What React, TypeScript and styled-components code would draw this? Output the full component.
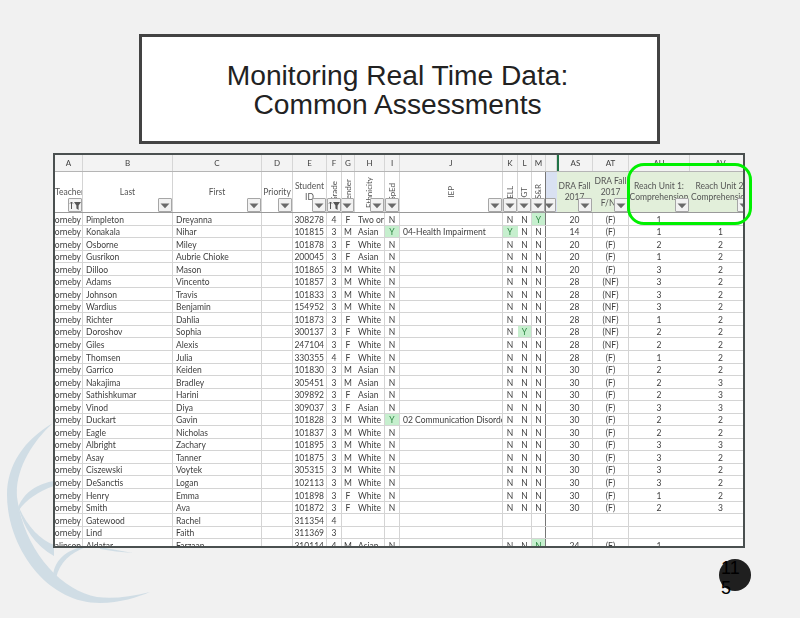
import { ReactElement } from 'react';

import styled, { createGlobalStyle } from 'styled-components';

type Align = 'left' | 'right' | 'center' | 'clip';

interface IColumn {
  letter: string;
  width: number;
  align: Align;
  title: string[];
  rotated?: boolean;
  green?: boolean;
  blue?: boolean;
  noLine?: boolean;
  freeze?: boolean;
  filter?: 'plain' | 'sorted' | 'active';
}

const columns: IColumn[] = [
  { letter: 'A', width: 28, align: 'clip', title: ['Teacher'], filter: 'sorted' },
  { letter: 'B', width: 90, align: 'left', title: ['Last'] },
  { letter: 'C', width: 89, align: 'left', title: ['First'] },
  { letter: 'D', width: 31, align: 'center', title: ['Priority'] },
  { letter: 'E', width: 34, align: 'right', title: ['Student', 'ID'] },
  { letter: 'F', width: 15, align: 'center', title: ['Grade'], rotated: true, filter: 'active' },
  { letter: 'G', width: 13, align: 'center', title: ['Gender'], rotated: true, noLine: true },
  { letter: 'H', width: 30, align: 'left', title: ['Ethnicity'], rotated: true },
  { letter: 'I', width: 15, align: 'center', title: ['SpEd'], rotated: true },
  { letter: 'J', width: 103, align: 'left', title: ['IEP'], rotated: true },
  { letter: 'K', width: 15, align: 'center', title: ['ELL'], rotated: true, noLine: true },
  { letter: 'L', width: 14, align: 'center', title: ['GT'], rotated: true },
  { letter: 'M', width: 14, align: 'center', title: ['S&R'], rotated: true, freeze: true },
  { letter: '', width: 11, align: 'center', title: [], blue: true, noLine: true },
  { letter: 'AS', width: 36, align: 'center', title: ['DRA Fall', '2017'], green: true },
  { letter: 'AT', width: 36, align: 'center', title: ['DRA Fall', '2017', 'F/NF'], green: true },
  { letter: 'AU', width: 61, align: 'center', title: ['Reach Unit 1:', 'Comprehension'], green: true, noLine: true },
  { letter: 'AV', width: 62, align: 'center', title: ['Reach Unit 2:', 'Comprehension'], green: true },
];

const template = columns.map((c) => `${c.width}px`).join(' ');

// one string per row, "|" between the columns, * marks a flagged (green) cell
const rows = [
  'Thorneby|Pimpleton|Dreyanna||308278|4|F|Two or|N||N|N|*Y||20|(F)|1|',
  'Thorneby|Konakala|Nihar||101815|3|M|Asian|*Y|04-Health Impairment|*Y|N|N||14|(F)|1|1',
  'Thorneby|Osborne|Miley||101878|3|F|White|N||N|N|N||20|(F)|2|2',
  'Thorneby|Gusrikon|Aubrie Chioke||200045|3|F|Asian|N||N|N|N||20|(F)|1|2',
  'Thorneby|Dilloo|Mason||101865|3|M|White|N||N|N|N||20|(F)|3|2',
  'Thorneby|Adams|Vincento||101857|3|M|White|N||N|N|N||28|(NF)|3|2',
  'Thorneby|Johnson|Travis||101833|3|M|White|N||N|N|N||28|(NF)|3|2',
  'Thorneby|Wardius|Benjamin||154952|3|M|White|N||N|N|N||28|(NF)|3|2',
  'Thorneby|Richter|Dahlia||101873|3|F|White|N||N|N|N||28|(NF)|1|2',
  'Thorneby|Doroshov|Sophia||300137|3|F|White|N||N|*Y|N||28|(NF)|2|2',
  'Thorneby|Giles|Alexis||247104|3|F|White|N||N|N|N||28|(NF)|2|2',
  'Thorneby|Thomsen|Julia||330355|4|F|White|N||N|N|N||28|(F)|1|2',
  'Thorneby|Garrico|Keiden||101830|3|M|Asian|N||N|N|N||30|(F)|2|2',
  'Thorneby|Nakajima|Bradley||305451|3|M|Asian|N||N|N|N||30|(F)|2|3',
  'Thorneby|Sathishkumar|Harini||309892|3|F|Asian|N||N|N|N||30|(F)|2|3',
  'Thorneby|Vinod|Diya||309037|3|F|Asian|N||N|N|N||30|(F)|3|3',
  'Thorneby|Duckart|Gavin||101828|3|M|White|*Y|02 Communication Disorder|N|N|N||30|(F)|2|2',
  'Thorneby|Eagle|Nicholas||101837|3|M|White|N||N|N|N||30|(F)|2|2',
  'Thorneby|Albright|Zachary||101895|3|M|White|N||N|N|N||30|(F)|3|3',
  'Thorneby|Asay|Tanner||101875|3|M|White|N||N|N|N||30|(F)|3|2',
  'Thorneby|Ciszewski|Voytek||305315|3|M|White|N||N|N|N||30|(F)|3|2',
  'Thorneby|DeSanctis|Logan||102113|3|M|White|N||N|N|N||30|(F)|3|2',
  'Thorneby|Henry|Emma||101898|3|F|White|N||N|N|N||30|(F)|1|2',
  'Thorneby|Smith|Ava||101872|3|F|White|N||N|N|N||30|(F)|2|3',
  'Thorneby|Gatewood|Rachel||311354|4||||||||||||',
  'Thorneby|Lind|Faith||311369|3||||||||||||',
  'Malinson|Aldatar|Farzaan||310114|4|M|Asian|N||N|N|*N||24|(F)|1|',
];

function FilterButton({ kind }: { kind: IColumn['filter'] }): ReactElement {
  return (
    <FilterBox>
      <svg width="12" height="12" viewBox="0 0 12 12">
        {kind === 'sorted' || kind === 'active' ? (
          <>
            <path d="M5 3h7L9.6 6.4V11L7.4 9.6V6.4z" fill="#555" />
            <path d="M2.5 10V3M1 4.6 2.5 3 4 4.6" stroke="#555" fill="none" />
          </>
        ) : (
          <path d="M1.5 4.5h9L6 9.2z" fill="#6a6a6a" />
        )}
      </svg>
    </FilterBox>
  );
}

function Watermark(): ReactElement {
  return (
    <Swirl width="170" height="218" viewBox="0 400 170 218">
      <path d="M53 423C24 440 7 465 7 495 7 545 45 603 100 603 120 603 138 597 150 592 130 597 112 599 97 597 60 590 24 550 17 497 15 470 32 442 53 423Z" />
      <path d="M54 481C36 484 20 494 16 515 22 503 36 492 54 486Z" />
      <path d="M18 505C22 525 34 545 54 556V545C40 540 26 525 18 505Z" />
      <path d="M53 575C55 562 62 553 80 547H86C70 553 60 562 56 578Z" />
      <path d="M100 547 133 553C122 552 110 551 100 549Z" />
    </Swirl>
  );
}

function App(): ReactElement {
  return (
    <Page>
      <GlobalStyle />
      <Watermark />
      <TitleBox>
        Monitoring Real Time Data:
        <br />
        Common Assessments
      </TitleBox>
      <SheetFrame>
        <Sheet>
          <LetterRow>
            {columns.map((c) => (
              <LetterCell key={c.letter || 'gap'} $accent={c.letter === 'AS'}>
                {c.letter}
              </LetterCell>
            ))}
          </LetterRow>
          <HeaderRow>
            {columns.map((c) => (
              <HeaderCell
                key={c.letter || 'gap'}
                $green={c.green}
                $blue={c.blue}
                $freeze={c.freeze}
                $start={c.align === 'clip'}
              >
                <HeaderText $rotated={c.rotated}>
                  {c.title.map((line) => (
                    <span key={line}>{line}</span>
                  ))}
                </HeaderText>
                <FilterButton kind={c.filter ?? 'plain'} />
              </HeaderCell>
            ))}
          </HeaderRow>
          {rows.map((row) => (
            <DataRow key={row}>
              {row.split('|').map((value, i) => {
                const flagged = value.startsWith('*');
                return (
                  <DataCell
                    key={columns[i].letter || 'gap'}
                    $align={columns[i].align}
                    $flagged={flagged}
                    $noLine={columns[i].noLine}
                    $freeze={columns[i].freeze}
                  >
                    {flagged ? value.slice(1) : value}
                  </DataCell>
                );
              })}
            </DataRow>
          ))}
        </Sheet>
        <Highlight />
      </SheetFrame>
      <PageBadge>
        <BadgeText>11 5</BadgeText>
      </PageBadge>
    </Page>
  );
}

const GlobalStyle = createGlobalStyle`
  html, body {
    margin: 0;
    padding: 0;
    background: #f1f1f1;
  }
`;

const Page = styled.div`
  position: relative;
  width: 800px;
  height: 618px;
  overflow: hidden;
  padding-top: 34px;
  box-sizing: border-box;
  background: #f1f1f1;
`;

const Swirl = styled.svg`
  position: absolute;
  left: 0;
  top: 400px;
  fill: #d0dde5;
`;

const TitleBox = styled.div`
  position: relative;
  width: 521px;
  height: 110px;
  margin-left: 139px;
  box-sizing: border-box;
  border: 3px solid #434343;
  background: #fff;
  display: flex;
  align-items: center;
  justify-content: center;
  text-align: center;
  padding: 2px 4px 0 0;
  font-family: 'Liberation Sans', Arial, sans-serif;
  font-size: 28.2px;
  line-height: 29px;
  color: #222;
`;

const SheetFrame = styled.div`
  position: relative;
  width: 692px;
  height: 395px;
  margin: 9px 0 0 53px;
`;

const Sheet = styled.div`
  width: 100%;
  height: 100%;
  box-sizing: border-box;
  overflow: hidden;
  background: #fff;
  border: 2px solid #4a5050;
  font-family: Lato, 'Open Sans', sans-serif;
  font-size: 8.5px;
  color: #404040;
  filter: blur(0.4px);
`;

const GridRow = styled.div`
  display: grid;
  grid-template-columns: ${template};
`;

const LetterRow = styled(GridRow)`
  height: 17px;
  background: #f3f3f3;
  border-bottom: 1px solid #b5b5b5;
  box-sizing: border-box;
`;

const LetterCell = styled.div<{ $accent?: boolean }>`
  display: flex;
  align-items: center;
  justify-content: center;
  font-size: 8px;
  box-sizing: border-box;
  border-right: 1px solid #d6d6d6;
  border-left: ${(p) => (p.$accent ? '2px solid #217346' : 'none')};
`;

const HeaderRow = styled(GridRow)`
  height: 41px;
  border-bottom: 1px solid #9a9a9a;
  box-sizing: border-box;
`;

const HeaderCell = styled.div<{ $green?: boolean; $blue?: boolean; $freeze?: boolean; $start?: boolean }>`
  position: relative;
  display: flex;
  align-items: center;
  justify-content: ${(p) => (p.$start ? 'flex-start' : 'center')};
  overflow: hidden;
  box-sizing: border-box;
  background: ${(p) => (p.$green ? '#e2efda' : p.$blue ? '#d9e1f2' : '#fff')};
  border-right: 1px solid ${(p) => (p.$freeze ? '#777' : p.$green || p.$blue ? 'transparent' : '#d4d4d4')};
`;

const HeaderText = styled.div<{ $rotated?: boolean }>`
  display: flex;
  flex-direction: column;
  align-items: center;
  white-space: nowrap;
  line-height: 11px;
  color: #555;
  ${(p) => p.$rotated && 'writing-mode: vertical-rl; transform: rotate(180deg); font-size: 8px;'}
`;

const FilterBox = styled.div`
  position: absolute;
  right: 0;
  bottom: 0;
  width: 14px;
  height: 14px;
  box-sizing: border-box;
  display: flex;
  align-items: center;
  justify-content: center;
  background: #f2f2f2;
  border: 1px solid #a6a6a6;
  border-radius: 1px;
`;

const DataRow = styled(GridRow)`
  height: 12.56px;
  box-sizing: border-box;
  border-bottom: 1px solid #d4d4d4;
`;

const alignment: Record<Align, string> = {
  left: 'flex-start',
  right: 'flex-end',
  center: 'center',
  clip: 'flex-end',
};

const cellPadding: Record<Align, string> = {
  left: '0 2px 0 3px',
  right: '0 2px',
  center: '0 2px',
  clip: '0 1px',
};

const DataCell = styled.div<{ $align: Align; $flagged?: boolean; $noLine?: boolean; $freeze?: boolean }>`
  display: flex;
  align-items: flex-end;
  justify-content: ${(p) => alignment[p.$align]};
  padding: ${(p) => cellPadding[p.$align]};
  box-sizing: border-box;
  overflow: hidden;
  white-space: nowrap;
  line-height: 10px;
  background: ${(p) => (p.$flagged ? '#c6efce' : 'transparent')};
  color: ${(p) => (p.$flagged ? '#2f8a45' : 'inherit')};
  border-right: 1px solid ${(p) => (p.$freeze ? '#777' : p.$noLine ? 'transparent' : '#d4d4d4')};
`;

const Highlight = styled.div`
  position: absolute;
  left: 574px;
  top: 10px;
  width: 125px;
  height: 62px;
  box-sizing: border-box;
  border: 3px solid #00f000;
  border-radius: 17px;
`;

const PageBadge = styled.div`
  position: absolute;
  left: 719px;
  top: 559px;
  width: 32px;
  height: 32px;
  border-radius: 50%;
  background: #1f1f1f;
`;

const BadgeText = styled.div`
  width: 20px;
  margin: -1px 0 0 2px;
  font-family: 'Liberation Sans', Arial, sans-serif;
  font-size: 18px;
  line-height: 20px;
  color: #000;
`;

export default App;
